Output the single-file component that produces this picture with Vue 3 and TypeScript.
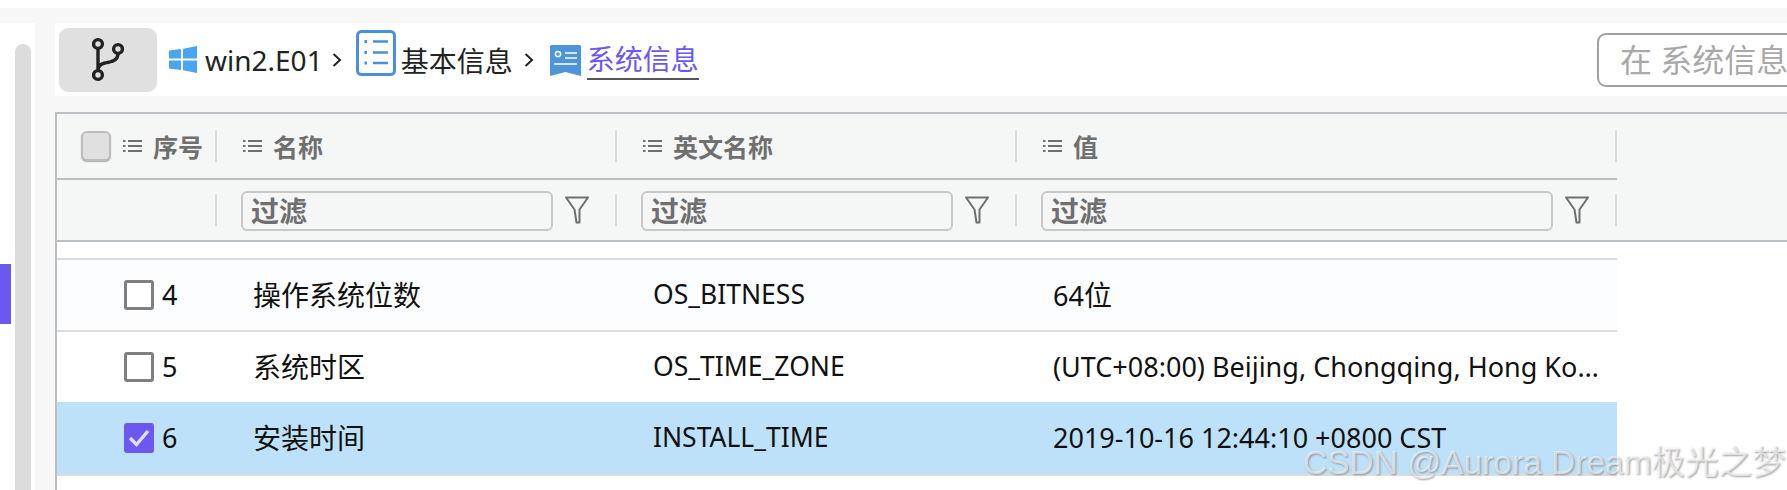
<template>
  <div class="page">
    <div class="top-white"></div>
    <div class="top-band"></div>
    <div class="main">
      <aside class="side">
        <div class="marker"></div>
        <div class="scroll"></div>
      </aside>
      <div class="gutter"></div>
      <section class="content">
        <div class="toolbar">
          <button class="branch">
            <svg width="32" height="46" viewBox="0 0 32 46" fill="none" stroke="#222" stroke-width="3.4">
              <circle cx="6" cy="7" r="4.4" />
              <circle cx="26" cy="12" r="4.4" />
              <circle cx="6" cy="38" r="4.4" />
              <path d="M6 11.5V33.5M26 16.5C26 24 19 25 13 26C8.500 27 6 29 6 33.5" />
            </svg>
          </button>
          <nav class="crumbs">
            <svg class="win" width="28" height="27" viewBox="0 0 28 27" fill="#4aa5f0">
              <polygon points="0,4.500 12,3 12,12.500 0,12.500" />
              <polygon points="14,2.700 28,0 28,12.500 14,12.500" />
              <polygon points="0,14.500 12,14.500 12,24 0,22.500" />
              <polygon points="14,14.500 28,14.500 28,27 14,24.300" />
            </svg>
            <span class="crumb-latin">win2.E01</span>
            <svg class="chev" width="10" height="14" viewBox="0 0 10 14" fill="none" stroke="#222" stroke-width="2"><path d="M1.500 1L8 7L1.500 13" /></svg>
            <svg class="doc" width="40" height="46" viewBox="0 0 40 46" fill="none" stroke="#4a8fdc">
              <rect x="1.500" y="1.500" width="37" height="43" rx="4" stroke-width="3" />
              <path d="M17 11.500H32M17 22.500H32M17 33H32" stroke-width="2.400" />
              <path d="M8.500 11.500h2.500M8.500 22.500h2.500M8.500 33h2.500" stroke-width="2.800" />
            </svg>
            <span class="crumb-text">基本信息</span>
            <svg class="chev chev2" width="10" height="14" viewBox="0 0 10 14" fill="none" stroke="#222" stroke-width="2"><path d="M1.500 1L8 7L1.500 13" /></svg>
            <svg class="book" width="31" height="31" viewBox="0 0 31 31">
              <path d="M0 1.500Q0 0 1.500 0H29.500Q31 0 31 1.500V31L15.500 27L0 31Z" fill="#4d95d8" />
              <circle cx="8" cy="9" r="2.600" fill="none" stroke="#fff" stroke-width="1.500" />
              <path d="M15 8H27M15 13H27M4 19H27" stroke="#fff" stroke-width="1.600" />
            </svg>
            <span class="crumb-active">系统信息</span>
          </nav>
          <div class="search">在 系统信息</div>
        </div>
        <div class="strip"></div>

        <div class="table">
          <div class="head-row">
            <div class="cols head-cols">
              <div v-for="(col, i) in columns" :key="col" class="cell" :class="{ first: i === 0 }">
                <span v-if="i === 0" class="head-check"></span>
                <svg class="list" width="19" height="14" viewBox="0 0 19 14" fill="none" stroke="#6f6f6f" stroke-width="2">
                  <path d="M0 2h2.500M0 7h2.500M0 12h2.500M5 2H19M5 7H19M5 12H19" />
                </svg>
                <span class="head-title">{{ col }}</span>
                <i class="sep"></i>
              </div>
            </div>
          </div>
          <div class="filter-row">
            <div class="cols">
              <div v-for="(col, i) in columns" :key="col" class="cell" :class="{ first: i === 0 }">
                <template v-if="i > 0">
                  <div class="filter-input">过滤</div>
                  <svg class="funnel" width="24" height="28" viewBox="0 0 24 28" fill="none" stroke="#6f6f6f" stroke-width="2" stroke-linejoin="round">
                    <path d="M1 1.500H23L14.500 13.500V26.500H11.500L9.500 13.500Z" />
                  </svg>
                </template>
                <i class="sep"></i>
              </div>
            </div>
          </div>
          <div class="spacer"></div>
          <div
            v-for="row in rows"
            :key="row.no"
            class="cols row"
            :class="{ selected: row.checked, tinted: row.no === 4 }"
          >
            <div class="td first-td">
              <span class="check" :class="{ on: row.checked }">
                <svg v-if="row.checked" width="22" height="18" viewBox="0 0 22 18" fill="none" stroke="#dfe0ff" stroke-width="3.400">
                  <path d="M2 9L8.500 15.500L20 2" />
                </svg>
              </span>
              <span class="latin no">{{ row.no }}</span>
            </div>
            <div class="td name">{{ row.name }}</div>
            <div class="td latin key">{{ row.key }}</div>
            <div class="td latin value">{{ row.value }}<span v-if="row.suffix" class="name">{{ row.suffix }}</span></div>
          </div>
        </div>
      </section>
    </div>
    <div class="watermark">CSDN @Aurora Dream极光之梦</div>
  </div>
</template>

<script setup lang="ts">
interface InfoRow {
  no: number;
  name: string;
  key: string;
  value: string;
  suffix?: string;
  checked: boolean;
}

const columns = ["序号", "名称", "英文名称", "值"];

const rows: InfoRow[] = [
  { no: 4, name: "操作系统位数", key: "OS_BITNESS", value: "64", suffix: "位", checked: false },
  {
    no: 5,
    name: "系统时区",
    key: "OS_TIME_ZONE",
    value: "(UTC+08:00) Beijing, Chongqing, Hong Kong, Urumqi",
    checked: false,
  },
  { no: 6, name: "安装时间", key: "INSTALL_TIME", value: "2019-10-16 12:44:10 +0800 CST", checked: true },
];
</script>

<style>
html,
body {
  margin: 0;
  background: #fff;
}
</style>

<style scoped>
.page {
  position: relative;
  width: 1787px;
  height: 490px;
  overflow: hidden;
  display: flex;
  flex-direction: column;
  background: #fff;
  font-family: "Noto Sans", "Noto Sans CJK SC", sans-serif;
  color: #111;
}

.top-white {
  height: 8px;
}

.top-band {
  height: 15px;
  background: #f7f7f7;
}

.main {
  flex: 1;
  min-height: 0;
  display: flex;
}

.side {
  width: 35px;
  display: flex;
  align-items: flex-start;
}

.marker {
  width: 11px;
  height: 60px;
  margin-top: 241px;
  background: #6c57ef;
}

.scroll {
  width: 16px;
  height: 460px;
  margin: 21px 0 0 4px;
  border-radius: 8px 8px 0 0;
  background: #dcdcdc;
}

.gutter {
  width: 20px;
  background: #f7f7f7;
}

.content {
  flex: 1;
  min-width: 0;
}

.toolbar {
  height: 73px;
  display: flex;
  align-items: center;
  padding-left: 4px;
  background: #fff;
}

.branch {
  width: 98px;
  height: 64px;
  flex: none;
  display: flex;
  align-items: center;
  justify-content: center;
  padding: 0;
  border: 0;
  border-radius: 9px;
  background: #e0e0e0;
}

.crumbs {
  flex: 1;
  display: flex;
  align-items: center;
  min-width: 0;
}

.win {
  margin: 0 8px 0 12px;
}

.crumb-latin {
  font-size: 28px;
  color: #222;
}

.chev {
  margin: 0 14px 0 9px;
}

.doc {
  margin-bottom: 13px;
}

.crumb-text {
  margin-left: 5px;
  font-size: 28px;
  color: #222;
}

.chev2 {
  margin: 0 16px 0 11px;
}

.book {
  margin-top: 2px;
}

.crumb-active {
  margin-left: 6px;
  font-size: 28px;
  line-height: 38px;
  color: #6c57ef;
  border-bottom: 2px solid #555;
}

.search {
  flex: none;
  width: 190px;
  height: 50px;
  margin-right: -25px;
  padding-left: 21px;
  border: 2px solid #a0a0a0;
  border-radius: 9px;
  font-size: 32px;
  line-height: 50px;
  color: #a9a9a9;
  white-space: nowrap;
  overflow: hidden;
}

.strip {
  height: 16px;
  background: #f7f7f7;
}

.table {
  height: 378px;
  border-top: 2px solid #b9bfc3;
  border-left: 2px solid #b9bfc3;
}

.cols {
  width: 1560px;
  display: grid;
  grid-template-columns: 160px 400px 400px 600px;
}

.head-row {
  background: #f5f7f6;
}

.head-cols {
  height: 64px;
  border-bottom: 2px solid #b9bfc3;
}

.filter-row {
  height: 60px;
  background: #f5f7f6;
  border-bottom: 2px solid #b9bfc3;
}

.filter-row .cols {
  height: 60px;
}

.cell {
  display: flex;
  align-items: center;
  min-width: 0;
  padding-left: 26px;
}

.cell.first {
  padding-left: 24px;
}

.sep {
  width: 2px;
  height: 32px;
  margin-left: auto;
  background: #dcdede;
}

.head-check {
  width: 26px;
  height: 26px;
  margin-right: 12px;
  border: 2px solid #bdbdbd;
  border-radius: 6px;
  background: #e0e0e0;
  box-shadow: 0 1px 1px #aaa;
}

.list {
  flex: none;
}

.head-title {
  margin-left: 11px;
  font-size: 25px;
  font-weight: 700;
  color: #6f6f6f;
  white-space: nowrap;
}

.filter-input {
  flex: none;
  width: 300px;
  height: 36px;
  margin-top: 2px;
  padding-left: 8px;
  border: 2px solid #c8c8c8;
  border-radius: 6px;
  font-size: 28px;
  font-weight: 700;
  line-height: 36px;
  color: #6f6f6f;
  margin-left: -2px;
}

.cell:last-child .filter-input {
  width: 500px;
}

.funnel {
  flex: none;
  margin-left: 12px;
}

.spacer {
  height: 16px;
}

.row {
  height: 70px;
  border-top: 2px solid #dcdcdc;
  background: #fff;
  font-size: 28px;
}

.row.tinted {
  background: #fcfdff;
}

.row.selected {
  height: 72px;
  border-bottom: 2px solid #dcdcdc;
  background: #bee1fa;
  border-top: 0;
}

.td {
  display: flex;
  align-items: center;
  min-width: 0;
  padding-left: 36px;
  padding-bottom: 2px;
  white-space: nowrap;
  overflow: hidden;
}

.first-td {
  padding-left: 67px;
  padding-bottom: 0;
}

.check {
  flex: none;
  width: 24px;
  height: 24px;
  display: flex;
  align-items: center;
  justify-content: center;
  border: 3px solid #7f7f7f;
  border-radius: 3px;
  background: #fff;
}

.check.on {
  border-color: #6c57ef;
  background: #6c57ef;
}

.name {
  font-size: 28px;
}

.latin {
  font-size: 27px;
}

.key {
  font-size: 26.5px;
}

.no {
  margin-left: 8px;
  margin-bottom: 2px;
}

.value {
  display: block;
  align-self: center;
  padding-right: 8px;
  padding-bottom: 2px;
  text-overflow: ellipsis;
}

.watermark {
  position: absolute;
  left: 1303px;
  top: 435px;
  font-family: "Liberation Sans", "Noto Sans CJK SC", sans-serif;
  font-size: 33.5px;
  white-space: nowrap;
  color: rgba(255, 255, 255, 0.6);
  text-shadow: 1px 1px 2px rgba(110, 110, 110, 0.65);
}
</style>
